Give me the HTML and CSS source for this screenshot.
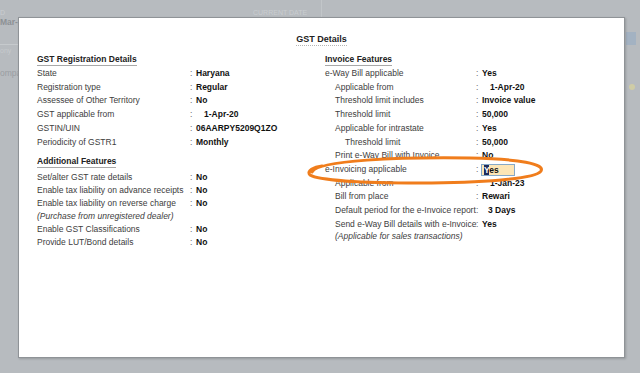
FILE: index.html
```html
<!DOCTYPE html>
<html lang="en">
<head>
  <meta charset="UTF-8" />
  <meta name="viewport" content="width=device-width, initial-scale=1" />
  <title>GST Details</title>
  <link rel="stylesheet" href="styles.css">
</head>
<body>
  <div class="app">
    <div class="app-main">
      <div class="app-head">
        <div class="app-cell app-cell-left">
          <div class="app-cap">D</div>
          <div class="app-val">Mar-20</div>
        </div>
        <div class="app-cell app-cell-right">
          <div class="app-cap app-cap-date">CURRENT DATE</div>
        </div>
      </div>
      <div class="app-side">
        <div class="app-side-row">ony</div>
        <div class="app-side-row app-side-name">ompa</div>
      </div>
    </div>
    <div class="app-scroll">
      <span class="app-scroll-thumb"></span>
      <span class="app-scroll-dot"></span>
    </div>
  </div>

  <div class="modal">
    <h1 class="modal-title"><span>GST Details</span></h1>

    <div class="cols">
      <section class="col col-left">
        <h2 class="sec-head">GST Registration Details</h2>
        <div class="field"><span class="lbl">State</span><span class="colon">:</span><span class="val">Haryana</span></div>
        <div class="field"><span class="lbl">Registration type</span><span class="colon">:</span><span class="val">Regular</span></div>
        <div class="field"><span class="lbl">Assessee of Other Territory</span><span class="colon">:</span><span class="val">No</span></div>
        <div class="field"><span class="lbl">GST applicable from</span><span class="colon">:</span><span class="val val-date">1-Apr-20</span></div>
        <div class="field"><span class="lbl">GSTIN/UIN</span><span class="colon">:</span><span class="val">06AARPY5209Q1ZO</span></div>
        <div class="field"><span class="lbl">Periodicity of GSTR1</span><span class="colon">:</span><span class="val">Monthly</span></div>

        <h2 class="sec-head sec-head-next">Additional Features</h2>
        <div class="extra">
          <div class="field"><span class="lbl">Set/alter GST rate details</span><span class="colon">:</span><span class="val">No</span></div>
          <div class="field"><span class="lbl">Enable tax liability on advance receipts</span><span class="colon">:</span><span class="val">No</span></div>
          <div class="field">
            <span class="lbl">Enable tax liability on reverse charge<em class="note">(Purchase from unregistered dealer)</em></span><span class="colon">:</span><span class="val">No</span>
          </div>
          <div class="field"><span class="lbl">Enable GST Classifications</span><span class="colon">:</span><span class="val">No</span></div>
          <div class="field"><span class="lbl">Provide LUT/Bond details</span><span class="colon">:</span><span class="val">No</span></div>
        </div>
      </section>

      <section class="col col-right">
        <h2 class="sec-head">Invoice Features</h2>
        <div class="field"><span class="lbl">e-Way Bill applicable</span><span class="colon">:</span><span class="val">Yes</span></div>
        <div class="field"><span class="lbl sub">Applicable from</span><span class="colon">:</span><span class="val val-date">1-Apr-20</span></div>
        <div class="field"><span class="lbl sub">Threshold limit includes</span><span class="colon">:</span><span class="val">Invoice value</span></div>
        <div class="field"><span class="lbl sub">Threshold limit</span><span class="colon">:</span><span class="val">50,000</span></div>
        <div class="field"><span class="lbl sub">Applicable for intrastate</span><span class="colon">:</span><span class="val">Yes</span></div>
        <div class="field"><span class="lbl sub2">Threshold limit</span><span class="colon">:</span><span class="val">50,000</span></div>
        <div class="field"><span class="lbl sub">Print e-Way Bill with Invoice</span><span class="colon">:</span><span class="val">No</span></div>
        <div class="field"><span class="lbl">e-Invoicing applicable</span><span class="colon">:</span><span class="val"><span class="edit"><span class="caret">Y</span>es</span></span></div>
        <div class="field"><span class="lbl sub">Applicable from</span><span class="colon">:</span><span class="val val-date">1-Jan-23</span></div>
        <div class="field"><span class="lbl sub">Bill from place</span><span class="colon">:</span><span class="val">Rewari</span></div>
        <div class="field"><span class="lbl sub">Default period for the e-Invoice report</span><span class="colon">:</span><span class="val val-days">3 Days</span></div>
        <div class="field">
          <span class="lbl sub">Send e-Way Bill details with e-Invoice<em class="note">(Applicable for sales transactions)</em></span><span class="colon">:</span><span class="val">Yes</span>
        </div>
      </section>
    </div>
  </div>

  <svg class="mark" width="640" height="373" viewBox="0 0 640 373">
    <path d="M312 172 C 318 160, 400 157, 470 158 C 520 159, 545 164, 541 171 C 536 179, 480 183, 420 183 C 360 183, 318 180, 310 175 C 306 171, 314 167, 322 166" fill="none" stroke="#f07d1c" stroke-width="3" stroke-linecap="round"/>
  </svg>
</body>
</html>
```

FILE: styles.css
```css
* {
  box-sizing: border-box;
}
body {
  margin: 0;
  width: 640px;
  height: 373px;
  overflow: hidden;
  position: relative;
  background: #b7bbbf;
  font-family: 'Liberation Sans', Arial, sans-serif;
  font-size: 8.5px;
  color: #333;
}

/* background application, mostly hidden by the dialog */
.app {
  height: 100%;
  display: flex;
}
.app-main {
  flex: 1;
  display: flex;
  flex-direction: column;
}
.app-head {
  display: flex;
  height: 30px;
}
.app-cell {
  padding-top: 8px;
}
.app-cell-left {
  width: 322px;
  border-right: 1px solid #c2c6c9;
}
.app-cell-right {
  flex: 1;
}
.app-cap {
  font-size: 7px;
  color: #c9cdd0;
  line-height: 9px;
}
.app-cap-date {
  margin-left: -69px;
}
.app-val {
  font-weight: bold;
  color: #8d9195;
  line-height: 10px;
}
.app-side {
  width: 18px;
  margin-top: 14px;
  border-top: 1px solid #c6cacd;
  overflow: hidden;
  white-space: nowrap;
}
.app-side-row {
  font-size: 7px;
  line-height: 12px;
  color: #c6cacd;
}
.app-side-name {
  margin-top: 10px;
  font-size: 8.5px;
  color: #9a9ea2;
}
.app-scroll {
  width: 16px;
  padding: 32px 0 0 2px;
  display: flex;
  flex-direction: column;
}
.app-scroll-thumb {
  width: 10px;
  height: 13px;
  background: #a3b2c2;
}
.app-scroll-dot {
  width: 6px;
  height: 6px;
  margin: 39px 0 0 3px;
  border-radius: 50%;
  background: #cfcca6;
}

/* dialog */
.modal {
  position: absolute;
  left: 18px;
  top: 17px;
  width: 607px;
  height: 341px;
  background: #fff;
  border: 1px solid #8f9397;
  box-shadow: 1px 1px 2px rgba(0, 0, 0, 0.18);
}
.modal-title {
  margin: 15px 0 0;
  text-align: center;
  font-size: 9px;
  font-weight: bold;
  line-height: 12px;
  color: #222;
}
.modal-title span {
  border-bottom: 1px dotted #b5b5b5;
  padding-bottom: 1px;
}
.cols {
  display: grid;
  grid-template-columns: 288px 1fr;
  padding: 9px 0 0 18px;
}
.sec-head {
  display: inline-block;
  margin: 0 0 1px;
  font-size: 8.5px;
  font-weight: bold;
  line-height: 11px;
  color: #222;
  border-bottom: 1px solid #a8a8a8;
}
.sec-head-next {
  margin: 7px 0 3px;
}
.field {
  display: grid;
  grid-template-columns: 153px 6px 1fr;
  line-height: 13.7px;
}
.extra .field {
  line-height: 13.1px;
}
.col-right .field {
  grid-template-columns: 151px 6px 1fr;
}
.lbl {
  color: #3d3d3d;
  white-space: nowrap;
}
.lbl.sub {
  padding-left: 10px;
}
.lbl.sub2 {
  padding-left: 20px;
}
.note {
  display: block;
  line-height: 11px;
  margin-bottom: 1px;
}
.colon {
  color: #666;
}
.val {
  font-weight: bold;
  color: #111;
  white-space: nowrap;
}
.val-date {
  padding-left: 8px;
}
.val-days {
  padding-left: 6px;
}
.edit {
  display: inline-block;
  width: 34px;
  height: 12px;
  line-height: 10px;
  margin-left: -1px;
  padding-left: 2px;
  background: #fde6b6;
  border: 1px solid #86a9c8;
  vertical-align: middle;
}
.caret {
  background: #1f2b5c;
  color: #fff;
}

/* hand-drawn highlight around e-Invoicing */
.mark {
  position: absolute;
  left: 0;
  top: 0;
  pointer-events: none;
}
```
